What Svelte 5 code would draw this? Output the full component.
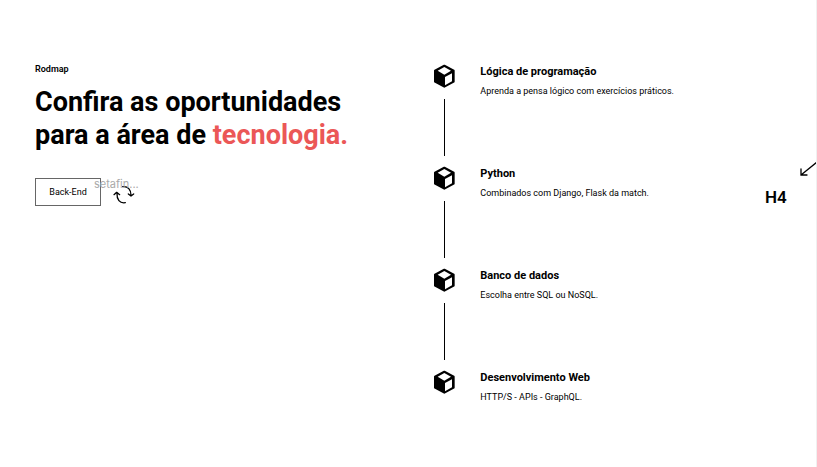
<script>
  const steps = [
    { title: 'Lógica de programação', text: 'Aprenda a pensa lógico com exercícios práticos.' },
    { title: 'Python', text: 'Combinados com Django, Flask da match.' },
    { title: 'Banco de dados', text: 'Escolha entre SQL ou NoSQL.' },
    { title: 'Desenvolvimento Web', text: 'HTTP/S - APIs - GraphQL.' }
  ];
</script>

<main>
  <section class="intro">
    <p class="eyebrow">Rodmap</p>
    <h1>Confira as oportunidades<br />para a área de <span>tecnologia.</span></h1>
    <div class="actions">
      <button class="track" type="button">Back-End</button>
      <button class="swap" type="button" aria-label="Back-End">
        <svg width="22" height="20" viewBox="0 0 66 60" fill="none" stroke="#000" stroke-width="4" stroke-linecap="round" stroke-linejoin="round">
          <path d="M29 5C45 3 54 14 54 31M46 27L54 33L62 27" />
          <path d="M37 53C20 56 11 43 12 25M3 29L11 22L20 29" />
        </svg>
      </button>
      <span class="note">setafin...</span>
    </div>
  </section>

  <ol class="steps">
    {#each steps as step, i}
      <li>
        <div class="rail">
          <svg width="22" height="24" viewBox="0 0 66 72" aria-hidden="true">
            <path d="M34 5L62 20V53L34 68L6 53V20Z" fill="#000" stroke="#000" stroke-width="6" stroke-linejoin="round" />
            <path d="M34 9L54 20L34 32L14 20Z" fill="#fff" />
            <path d="M36 39L57 28V52L36 64Z" fill="#fff" />
          </svg>
          {#if i < steps.length - 1}<span class="line"></span>{/if}
        </div>
        <div class="copy">
          <h2>{step.title}</h2>
          <p>{step.text}</p>
        </div>
      </li>
    {/each}
  </ol>

  <aside>
    <svg width="18" height="16" viewBox="0 0 18 16" fill="none" stroke="#000" stroke-width="1.3" stroke-linecap="round" aria-hidden="true">
      <path d="M19 0L3 13M3 7V13H9" />
    </svg>
    <h4>H4</h4>
  </aside>
</main>

<style>
  main {
    display: flex;
    box-sizing: border-box;
    min-height: 100vh;
    padding: 64px 0 32px 35px;
    background: #fff;
    border-right: 1px solid #f0f0f0;
    color: #000;
    font-family: Roboto, "Liberation Sans", sans-serif;
  }
  h1, h2, h4, p, ol { margin: 0; padding: 0; }
  .intro { flex: 0 0 51%; }
  .eyebrow {
    font-size: 9px;
    line-height: 11px;
    font-weight: 600;
  }
  h1 {
    margin-top: 11px;
    font-size: 27px;
    line-height: 33px;
    font-weight: 700;
    white-space: nowrap;
  }
  h1 span { color: #eb5757; }
  .actions {
    position: relative;
    display: flex;
    align-items: center;
    gap: 12px;
    margin-top: 26px;
  }
  button {
    margin: 0;
    font-family: inherit;
    color: #000;
    background: none;
    cursor: pointer;
  }
  .track {
    width: 66px;
    height: 28px;
    padding: 0;
    border: 1px solid #666;
    font-size: 9px;
  }
  .swap {
    display: flex;
    padding: 5px 0 0;
    border: 0;
  }
  .note {
    position: absolute;
    left: 59px;
    top: -1px;
    color: #aaa;
    font: 11px/14px Inter, sans-serif;
  }
  .steps {
    flex: 1;
    list-style: none;
  }
  li {
    display: flex;
    gap: 25px;
  }
  .rail {
    display: flex;
    flex-direction: column;
    align-items: center;
    width: 22px;
  }
  .rail svg { display: block; }
  .line {
    width: 1px;
    height: 57px;
    margin: 11px 0 10px;
    background: #000;
  }
  h2 {
    font-size: 11px;
    line-height: 15px;
    font-weight: 700;
  }
  .copy p {
    margin-top: 6px;
    font-size: 9px;
    line-height: 12px;
  }
  aside {
    display: flex;
    flex-direction: column;
    width: 51px;
    padding-top: 98px;
  }
  aside svg { align-self: flex-end; }
  h4 {
    margin-top: 9px;
    font-size: 17px;
    line-height: 20px;
    font-weight: 600;
  }
</style>
